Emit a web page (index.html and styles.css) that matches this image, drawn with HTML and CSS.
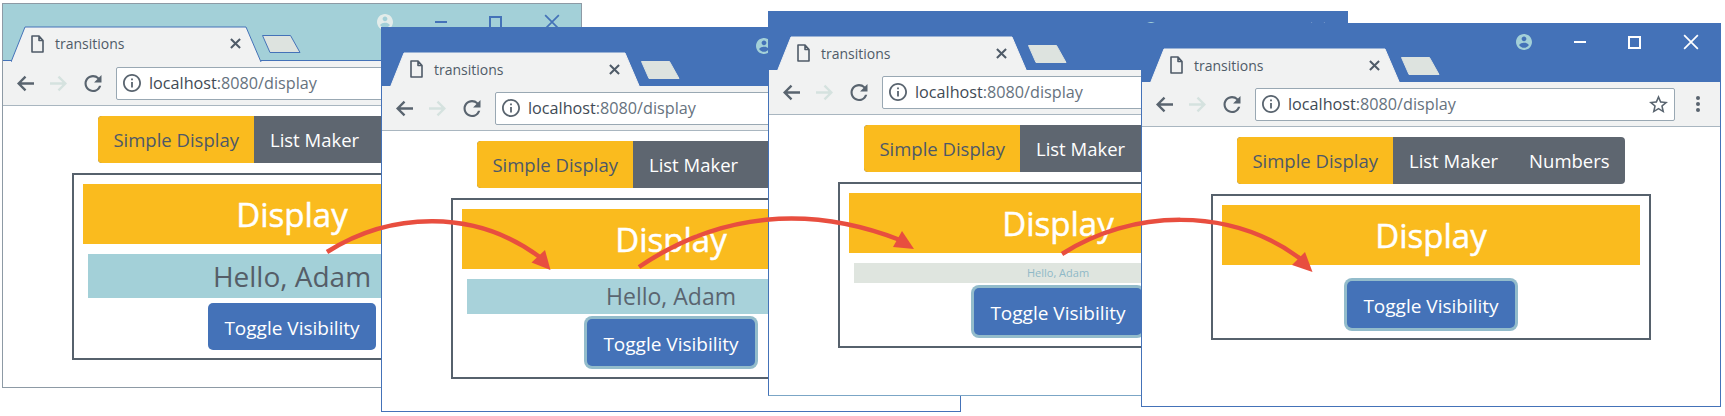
FILE: index.html
```html
<!DOCTYPE html>
<html lang="en">
<head>
    <meta charset="UTF-8">
    <meta name="viewport" content="width=device-width, initial-scale=1.0">
    <title>Transitions</title>
    <link rel="stylesheet" href="styles.css">
</head>
<body>
    <svg class="sprites" width="0" height="0">
        <symbol id="i-file" viewBox="0 0 13 18"><path d="M1 1h7l4 4.500V17H1zM8 1v4.500h4" fill="none" stroke="currentColor" stroke-width="1.600" stroke-linejoin="round"/></symbol>
        <symbol id="i-x" viewBox="0 0 12 12"><path d="M1 1l10 10M11 1L1 11" fill="none" stroke="currentColor" stroke-width="2.200"/></symbol>
        <symbol id="i-close" viewBox="0 0 14 14"><path d="M1 1l12 12M13 1L1 13" fill="none" stroke="currentColor" stroke-width="1.500"/></symbol>
        <symbol id="i-back" viewBox="0 0 17 16"><path d="M17 8H2.500M9 1.500L2.500 8 9 14.500" fill="none" stroke="currentColor" stroke-width="2.200"/></symbol>
        <symbol id="i-forward" viewBox="0 0 17 16"><path d="M0 8h14.500M8 1.500L14.500 8 8 14.500" fill="none" stroke="currentColor" stroke-width="2.200"/></symbol>
        <symbol id="i-reload" viewBox="4 4 16 16"><path d="M17.650 6.350A7.958 7.958 0 0 0 12 4c-4.420 0-7.990 3.580-7.990 8s3.570 8 7.990 8c3.730 0 6.840-2.550 7.730-6h-2.080A5.990 5.990 0 0 1 12 18c-3.310 0-6-2.690-6-6s2.690-6 6-6c1.660 0 3.140.690 4.220 1.780L13 11h7V4l-2.350 2.350z" fill="currentColor"/></symbol>
        <symbol id="i-info" viewBox="2 2 20 20"><path d="M11 7h2v2h-2zm0 4h2v6h-2zm1-9C6.480 2 2 6.480 2 12s4.480 10 10 10 10-4.480 10-10S17.520 2 12 2zm0 18c-4.410 0-8-3.590-8-8s3.590-8 8-8 8 3.590 8 8-3.590 8-8 8z" fill="currentColor"/></symbol>
        <symbol id="i-star" viewBox="2 2 20 20"><path d="M22 9.240l-7.190-.620L12 2 9.190 8.630 2 9.240l5.460 4.730L5.820 21 12 17.270 18.180 21l-1.630-7.030L22 9.240zM12 15.400l-3.760 2.270 1-4.280-3.320-2.880 4.380-.380L12 6.100l1.710 4.040 4.380.380-3.320 2.880 1 4.280L12 15.400z" fill="currentColor"/></symbol>
        <symbol id="i-dots" viewBox="0 0 6 18"><circle cx="3" cy="3" r="2" fill="currentColor"/><circle cx="3" cy="9" r="2" fill="currentColor"/><circle cx="3" cy="15" r="2" fill="currentColor"/></symbol>
        <symbol id="i-profile" viewBox="2 2 20 20"><path d="M12 2C6.480 2 2 6.480 2 12s4.480 10 10 10 10-4.480 10-10S17.520 2 12 2zm0 3c1.660 0 3 1.340 3 3s-1.340 3-3 3-3-1.340-3-3 1.340-3 3-3zm0 14.200c-2.500 0-4.710-1.280-6-3.220.030-1.990 4-3.080 6-3.080 1.990 0 5.970 1.090 6 3.080-1.290 1.940-3.500 3.220-6 3.220z" fill="currentColor"/></symbol>
        <symbol id="i-tab" viewBox="0 0 251 36"><path d="M0 36L14 1h221l15 35" stroke="currentColor" stroke-width="1"/></symbol>
        <symbol id="i-newtab" viewBox="0 0 39 18"><path d="M.5.500h28l9.500 17H8z" fill="currentColor" stroke="var(--newtab-line)"/></symbol>
    </svg>

    <div class="window win-1">
        <div class="titlebar">
            <div class="tab">
                <svg class="tab-shape"><use href="#i-tab"/></svg>
                <svg class="tab-file"><use href="#i-file"/></svg>
                <span class="tab-title">transitions</span>
                <svg class="tab-x"><use href="#i-x"/></svg>
            </div>
            <svg class="new-tab"><use href="#i-newtab"/></svg>
            <div class="controls">
                <svg class="profile"><use href="#i-profile"/></svg>
                <span class="minimize"></span>
                <span class="maximize"></span>
                <svg class="close"><use href="#i-close"/></svg>
            </div>
        </div>
        <div class="toolbar">
            <svg class="nav-icon"><use href="#i-back"/></svg>
            <svg class="nav-icon forward"><use href="#i-forward"/></svg>
            <svg class="nav-icon"><use href="#i-reload"/></svg>
            <div class="omnibox">
                <svg class="info"><use href="#i-info"/></svg>
                <span class="url"><b>localhost</b>:8080/display</span>
                <svg class="star"><use href="#i-star"/></svg>
            </div>
            <svg class="dots"><use href="#i-dots"/></svg>
        </div>
        <div class="page">
            <div class="nav">
                <a class="active">Simple Display</a>
                <a>List Maker</a>
                <a>Numbers</a>
            </div>
            <div class="box">
                <h3 class="display">Display</h3>
                <div class="hello hello-full">Hello, Adam</div>
                <button class="toggle">Toggle Visibility</button>
            </div>
        </div>
    </div>

    <div class="window win-2">
        <div class="titlebar">
            <div class="tab">
                <svg class="tab-shape"><use href="#i-tab"/></svg>
                <svg class="tab-file"><use href="#i-file"/></svg>
                <span class="tab-title">transitions</span>
                <svg class="tab-x"><use href="#i-x"/></svg>
            </div>
            <svg class="new-tab"><use href="#i-newtab"/></svg>
            <div class="controls">
                <svg class="profile"><use href="#i-profile"/></svg>
                <span class="minimize"></span>
                <span class="maximize"></span>
                <svg class="close"><use href="#i-close"/></svg>
            </div>
        </div>
        <div class="toolbar">
            <svg class="nav-icon"><use href="#i-back"/></svg>
            <svg class="nav-icon forward"><use href="#i-forward"/></svg>
            <svg class="nav-icon"><use href="#i-reload"/></svg>
            <div class="omnibox">
                <svg class="info"><use href="#i-info"/></svg>
                <span class="url"><b>localhost</b>:8080/display</span>
                <svg class="star"><use href="#i-star"/></svg>
            </div>
            <svg class="dots"><use href="#i-dots"/></svg>
        </div>
        <div class="page">
            <div class="nav">
                <a class="active">Simple Display</a>
                <a>List Maker</a>
                <a>Numbers</a>
            </div>
            <div class="box">
                <h3 class="display">Display</h3>
                <div class="hello hello-mid">Hello, Adam</div>
                <button class="toggle focused">Toggle Visibility</button>
            </div>
        </div>
    </div>

    <div class="window win-3">
        <div class="titlebar">
            <div class="tab">
                <svg class="tab-shape"><use href="#i-tab"/></svg>
                <svg class="tab-file"><use href="#i-file"/></svg>
                <span class="tab-title">transitions</span>
                <svg class="tab-x"><use href="#i-x"/></svg>
            </div>
            <svg class="new-tab"><use href="#i-newtab"/></svg>
            <div class="controls">
                <svg class="profile"><use href="#i-profile"/></svg>
                <span class="minimize"></span>
                <span class="maximize"></span>
                <svg class="close"><use href="#i-close"/></svg>
            </div>
        </div>
        <div class="toolbar">
            <svg class="nav-icon"><use href="#i-back"/></svg>
            <svg class="nav-icon forward"><use href="#i-forward"/></svg>
            <svg class="nav-icon"><use href="#i-reload"/></svg>
            <div class="omnibox">
                <svg class="info"><use href="#i-info"/></svg>
                <span class="url"><b>localhost</b>:8080/display</span>
                <svg class="star"><use href="#i-star"/></svg>
            </div>
            <svg class="dots"><use href="#i-dots"/></svg>
        </div>
        <div class="page">
            <div class="nav">
                <a class="active">Simple Display</a>
                <a>List Maker</a>
                <a>Numbers</a>
            </div>
            <div class="box">
                <h3 class="display">Display</h3>
                <div class="hello hello-small">Hello, Adam</div>
                <button class="toggle focused">Toggle Visibility</button>
            </div>
        </div>
    </div>

    <div class="window win-4">
        <div class="titlebar">
            <div class="tab">
                <svg class="tab-shape"><use href="#i-tab"/></svg>
                <svg class="tab-file"><use href="#i-file"/></svg>
                <span class="tab-title">transitions</span>
                <svg class="tab-x"><use href="#i-x"/></svg>
            </div>
            <svg class="new-tab"><use href="#i-newtab"/></svg>
            <div class="controls">
                <svg class="profile"><use href="#i-profile"/></svg>
                <span class="minimize"></span>
                <span class="maximize"></span>
                <svg class="close"><use href="#i-close"/></svg>
            </div>
        </div>
        <div class="toolbar">
            <svg class="nav-icon"><use href="#i-back"/></svg>
            <svg class="nav-icon forward"><use href="#i-forward"/></svg>
            <svg class="nav-icon"><use href="#i-reload"/></svg>
            <div class="omnibox">
                <svg class="info"><use href="#i-info"/></svg>
                <span class="url"><b>localhost</b>:8080/display</span>
                <svg class="star"><use href="#i-star"/></svg>
            </div>
            <svg class="dots"><use href="#i-dots"/></svg>
        </div>
        <div class="page">
            <div class="nav">
                <a class="active">Simple Display</a>
                <a>List Maker</a>
                <a>Numbers</a>
            </div>
            <div class="box">
                <h3 class="display">Display</h3>
                <button class="toggle focused">Toggle Visibility</button>
            </div>
        </div>
    </div>

    <svg class="arrows" viewBox="0 0 1725 416">
        <g class="arrow">
            <path d="M327 252C390 212 475 208 541 258"/>
            <polygon points="550.500,270 531.500,262.500 545,250"/>
        </g>
        <g class="arrow">
            <path d="M639 267C720 212 810 205 900 240"/>
            <polygon points="914,249 893,247 902,231"/>
        </g>
        <g class="arrow">
            <path d="M1062 254C1130 210 1230 205 1302 260"/>
            <polygon points="1312.500,272 1292,265 1305,252"/>
        </g>
    </svg>
</body>
</html>
```

FILE: styles.css
```css
body {
    position: relative;
    width: 1725px;
    height: 416px;
    margin: 0;
    overflow: hidden;
    background: white;
    font-family: "Open Sans", sans-serif;
}
.sprites {
    position: absolute;
}

/* the four browser windows sit on a free canvas */
.window {
    position: absolute;
    width: 580px;
    height: 385px;
    box-sizing: border-box;
    display: flex;
    flex-direction: column;
    background: white;
    border: 1px solid #4472b8;
    --title-bg: #4472b8;
    --tab-line: #f1f2f2;
    --profile: #a3d0d8;
    --control: white;
    --newtab: #dde3df;
    --newtab-line: #dde3df;
}
.win-1 {
    left: 2px;
    top: 3px;
    z-index: 1;
    border-color: #8d9aa5;
    --title-bg: #a3d0d8;
    --tab-line: #4472b8;
    --profile: #e3ecea;
    --control: #4472b8;
    --newtab-line: #4472b8;
}
.win-2 {
    left: 381px;
    top: 27px;
    z-index: 2;
}
.win-3 {
    left: 768px;
    top: 11px;
    z-index: 3;
    border-bottom-color: #7ba6c6;
}
.win-4 {
    left: 1141px;
    top: 23px;
    height: 384px;
    z-index: 4;
}

.titlebar {
    display: flex;
    align-items: flex-start;
    flex: 0 0 58px;
    padding-left: 8px;
    background: var(--title-bg);
}
.win-1 .titlebar {
    flex-basis: 57px;
    box-shadow: inset 0 -1px 0 #4472b8;
}
.tab {
    position: relative;
    display: flex;
    align-items: center;
    width: 251px;
    height: 34px;
    margin-top: 24px;
    color: #4f5b68;
}
.win-1 .tab {
    height: 35px;
    margin-top: 22px;
}
.tab-shape {
    position: absolute;
    left: 0;
    top: 0;
    width: 251px;
    height: 36px;
    fill: #f1f2f2;
    color: var(--tab-line);
}
.tab-file {
    position: relative;
    width: 13px;
    height: 18px;
    margin-left: 20px;
}
.tab-title {
    position: relative;
    margin-left: 11px;
    font-size: 14px;
}
.tab-x {
    position: relative;
    width: 11px;
    height: 11px;
    margin-left: auto;
    margin-right: 21px;
}
.new-tab {
    width: 39px;
    height: 18px;
    margin-top: 33px;
    color: var(--newtab);
}
.win-1 .new-tab {
    margin-top: 31px;
}
.controls {
    display: flex;
    align-items: center;
    margin-left: auto;
    margin-top: 10px;
    padding-right: 21px;
}
.profile,
.close {
    width: 16px;
    height: 16px;
}
.profile {
    color: var(--profile);
}
.minimize {
    width: 12px;
    height: 2px;
    margin: 0 42px;
    background: var(--control);
}
.maximize {
    width: 13px;
    height: 13px;
    box-sizing: border-box;
    margin-right: 42px;
    border: 2px solid var(--control);
}
.close {
    color: var(--control);
}

.toolbar {
    display: flex;
    align-items: center;
    flex: 0 0 45px;
    box-sizing: border-box;
    padding-left: 13px;
    background: #f1f2f2;
    border-bottom: 1px solid #a9b6c0;
    color: #59646f;
}
.nav-icon {
    width: 18px;
    height: 17px;
    margin-right: 16px;
}
.forward {
    color: #d5e2df;
}
.nav-icon:nth-child(3) {
    margin-right: 14px;
}
.omnibox {
    display: flex;
    align-items: center;
    width: 420px;
    height: 33px;
    box-sizing: border-box;
    padding: 0 6px;
    background: white;
    border: 1px solid #99a8b3;
    border-radius: 2px;
}
.info {
    width: 18px;
    height: 18px;
}
.url {
    margin-left: 8px;
    font-size: 16.200px;
    color: #66727e;
}
.url b {
    font-weight: normal;
    color: #3f4a55;
}
.star {
    width: 19px;
    height: 19px;
    margin-left: auto;
}
.dots {
    width: 6px;
    height: 18px;
    margin-left: 20px;
}

.page {
    flex: 1;
    display: flex;
    flex-direction: column;
    align-items: center;
    padding-top: 10px;
}
.nav {
    display: flex;
    margin-bottom: 10px;
    background: #5e6670;
    border-radius: 4px;
    overflow: hidden;
}
.nav a {
    padding: 1px 15.500px 0;
    font-size: 18.500px;
    line-height: 46px;
    color: white;
}
.nav a.active {
    background: #fabb1e;
    color: #4d5868;
}
.box {
    display: flex;
    flex-direction: column;
    align-items: center;
    width: 440px;
    box-sizing: border-box;
    padding: 9px 9px 8px;
    border: 2px solid #56616c;
}
.display {
    align-self: stretch;
    margin: 0 0 10px;
    padding-top: 2px;
    background: #fabb1e;
    color: white;
    font-size: 33px;
    font-weight: normal;
    -webkit-text-stroke: 0.500px white;
    line-height: 58px;
    text-align: center;
}
.hello {
    align-self: stretch;
    margin: 0 5px 5px;
    text-align: center;
}
.hello-full {
    background: #a3d0d8;
    color: #555e68;
    font-size: 28px;
    line-height: 44px;
}
.hello-mid {
    background: #a8d2da;
    color: #5a6570;
    font-size: 23px;
    line-height: 35px;
}
.hello-small {
    background: #dfe5df;
    color: #8fb9c7;
    font-size: 11px;
    line-height: 20px;
}
.toggle {
    width: 168px;
    height: 47px;
    padding: 2px 0 0;
    background: #4472b8;
    color: white;
    font-family: inherit;
    font-size: 19px;
    border: none;
    border-radius: 5px;
}
.focused {
    margin: 0 0 3px;
    box-shadow: 0 0 0 3px #93bccb;
}
.display + .toggle {
    margin: 6px 0 2px;
}

.arrows {
    position: absolute;
    left: 0;
    top: 0;
    width: 1725px;
    height: 416px;
    z-index: 5;
    pointer-events: none;
}
.arrow path {
    fill: none;
    stroke: #e84e3f;
    stroke-width: 4.500;
}
.arrow polygon {
    fill: #e84e3f;
}
```
